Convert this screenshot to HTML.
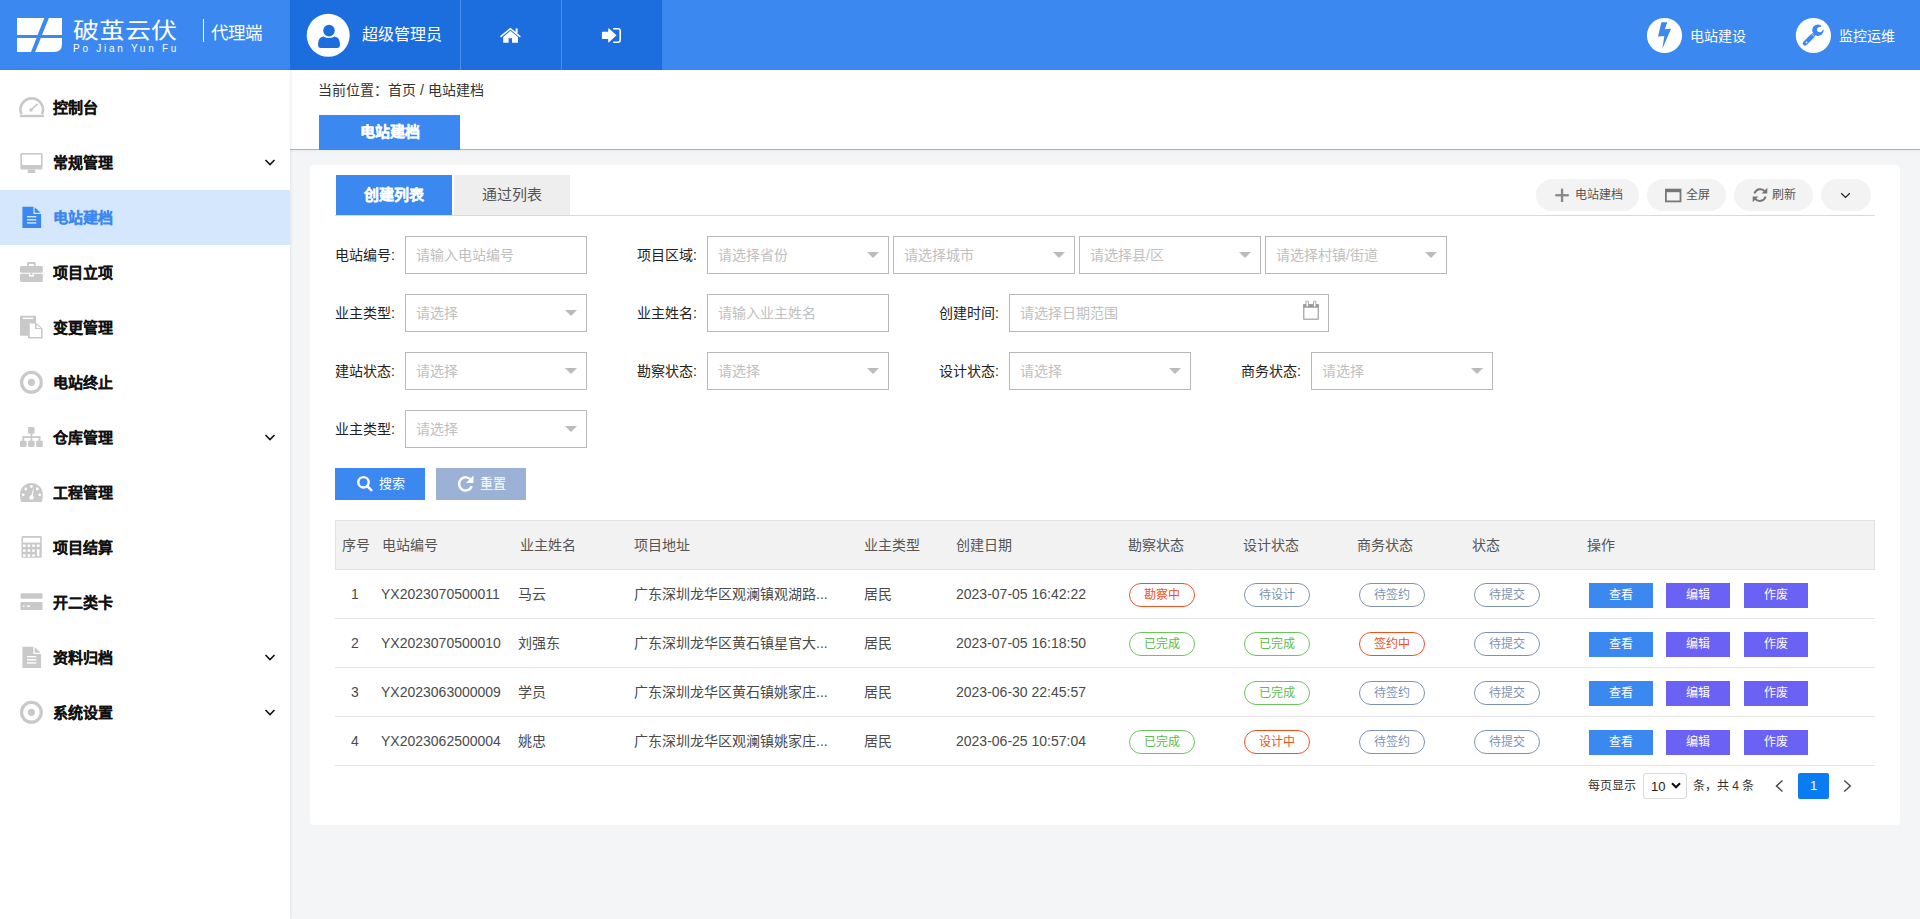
<!DOCTYPE html>
<html lang="zh-CN"><head><meta charset="utf-8">
<style>
*{margin:0;padding:0;box-sizing:border-box}
html,body{width:1920px;height:919px;overflow:hidden;background:#f4f5f7;font-family:"Liberation Sans",sans-serif;color:#333;position:relative}
.abs{position:absolute}
#hdr{position:absolute;left:0;top:0;width:1920px;height:70px;background:#3a88f0;color:#fff}
#hdr .dark{position:absolute;left:290px;top:0;width:372px;height:70px;background:#1c6edf}
#hdr .dv{position:absolute;top:0;width:1px;height:70px;background:#4d8ee6}
#side{position:absolute;left:0;top:70px;width:290px;height:849px;background:#fff;box-shadow:1px 0 3px rgba(0,0,0,0.07);z-index:2}
.mi{position:absolute;left:0;width:290px;height:55px;margin-top:-70px}
.mi .t{position:absolute;left:53px;top:0;line-height:55px;font-size:15px;font-weight:bold;color:#111;-webkit-text-stroke:0.15px #111}
.mi.act{background:#d5e7fd}
.mi.act .t{color:#3a88f0;-webkit-text-stroke:0.15px #3a88f0}
#topw{position:absolute;left:290px;top:70px;width:1630px;height:80px;background:#fff;border-bottom:1px solid #8fb8ee;box-shadow:0 1px 3px rgba(0,0,0,0.06)}
#card{position:absolute;left:310px;top:165px;width:1590px;height:660px;background:#fff;border-radius:4px}
.lbl{position:absolute;font-size:14px;line-height:20px;color:#222}
.inp{position:absolute;height:38px;border:1px solid #b8b8b8;background:#fff}
.inp span{position:absolute;left:10px;top:0;line-height:36px;font-size:14px;color:#c0c0c0;white-space:nowrap}
.inp i{position:absolute;right:9px;top:15px;width:0;height:0;border-left:6px solid transparent;border-right:6px solid transparent;border-top:6px solid #bbb}
.pill{position:absolute;top:179px;height:32px;border-radius:16px;background:#f3f3f3;font-size:13px;color:#555;line-height:31px}
.th{position:absolute;top:520px;line-height:50px;font-size:14px;color:#555}
.td{position:absolute;font-size:14px;color:#4a4a4a;white-space:nowrap}
.tag{position:absolute;width:66px;height:24px;border:1px solid;border-radius:12px;font-size:12px;text-align:center;line-height:22px}
.tg{color:#5dbb4f;border-color:#6cc65c}
.tb{color:#7e93b4;border-color:#7e93b4}
.tr{color:#f0521e;border-color:#f0521e}
.op{position:absolute;width:64px;height:25px;font-size:12px;color:#fff;text-align:center;line-height:25px}
.hl{position:absolute;left:335px;width:1540px;height:1px;background:#e4e4e4}

</style></head><body>
<div id="side">
<div class="mi" style="top:80px"><div class="t">控制台</div></div>
<div class="mi" style="top:135px"><div class="t">常规管理</div></div>
<div class="mi act" style="top:190px"><div class="t">电站建档</div></div>
<div class="mi" style="top:245px"><div class="t">项目立项</div></div>
<div class="mi" style="top:300px"><div class="t">变更管理</div></div>
<div class="mi" style="top:355px"><div class="t">电站终止</div></div>
<div class="mi" style="top:410px"><div class="t">仓库管理</div></div>
<div class="mi" style="top:465px"><div class="t">工程管理</div></div>
<div class="mi" style="top:520px"><div class="t">项目结算</div></div>
<div class="mi" style="top:575px"><div class="t">开二类卡</div></div>
<div class="mi" style="top:630px"><div class="t">资料归档</div></div>
<div class="mi" style="top:685px"><div class="t">系统设置</div></div>

</div>
<svg class="abs" style="left:0;top:0;z-index:3" width="290" height="919" viewBox="0 0 290 919"><path d="M21.5,114.2 A11.2,11.2 0 1 1 41.9,114.2" fill="none" stroke="#c9c9c9" stroke-width="2.6"/>
<rect x="19.8" y="114.8" width="24" height="2.4" fill="#c9c9c9"/>
<line x1="31" y1="109.8" x2="37" y2="104.4" stroke="#c9c9c9" stroke-width="1.6" stroke-linecap="round"/>
<circle cx="31" cy="110" r="1.7" fill="#c9c9c9"/>
<rect x="20.3" y="153" width="22.3" height="16.6" rx="1.6" fill="#c9c9c9"/>
<rect x="22" y="154.6" width="19" height="10.4" fill="#fff"/>
<path d="M28,169.5 L35,169.5 L35.4,173 L27.6,173 Z" fill="#c9c9c9"/>
<path d="M22.4,206.7 L33.4,206.7 L33.4,213.89999999999998 L41.1,213.89999999999998 L41.1,228.0 L22.4,228.0 Z" fill="#3a88f0"/>
<path d="M34.7,207.29999999999998 L40.6,212.7 L34.7,212.7 Z" fill="#3a88f0"/>
<rect x="27" y="216.0" width="9.3" height="1.4" fill="#d5e7fd"/>
<rect x="27" y="219.1" width="9.3" height="1.4" fill="#d5e7fd"/>
<rect x="27" y="222.2" width="9.3" height="1.4" fill="#d5e7fd"/>
<path d="M27.2,267 L27.2,263.2 Q27.2,262 28.4,262 L34.4,262 Q35.6,262 35.6,263.2 L35.6,267 L33.8,267 L33.8,264 L29,264 L29,267 Z" fill="#c9c9c9"/>
<rect x="20" y="266" width="22.8" height="6.8" rx="1.4" fill="#c9c9c9"/>
<rect x="20" y="273.8" width="22.8" height="8.2" rx="1.2" fill="#c9c9c9"/>
<rect x="29" y="273" width="4.8" height="3.6" fill="#fff"/><rect x="30.3" y="273" width="2.2" height="2.2" fill="#c9c9c9"/>
<rect x="20" y="315.8" width="16" height="20" rx="0.8" fill="#c9c9c9"/>
<rect x="22.8" y="317.6" width="10.3" height="1.4" fill="#fff"/>
<path d="M28,322 L35.5,322 L42.6,328.8 L42.6,338.6 L28,338.6 Z" fill="#c9c9c9"/>
<path d="M29.8,323.6 L35,323.6 L35,329 L41,329 L41,337 L29.8,337 Z" fill="#fff"/>
<path d="M36.6,324.5 L40.2,328 L36.6,328 Z" fill="#fff"/>
<circle cx="31.4" cy="382.3" r="9.9" fill="none" stroke="#c9c9c9" stroke-width="3.2"/>
<circle cx="31.4" cy="382.3" r="3.6" fill="#c9c9c9"/>
<rect x="28.1" y="427" width="6.5" height="6.8" rx="0.8" fill="#c9c9c9"/>
<rect x="30.5" y="433.5" width="1.8" height="7.5" fill="#c9c9c9"/>
<rect x="22.4" y="436.2" width="18" height="1.8" fill="#c9c9c9"/>
<rect x="22.4" y="436.2" width="1.8" height="5" fill="#c9c9c9"/>
<rect x="38.6" y="436.2" width="1.8" height="5" fill="#c9c9c9"/>
<rect x="20" y="440.8" width="6.6" height="6.1" rx="0.8" fill="#c9c9c9"/>
<rect x="28.1" y="440.8" width="6.5" height="6.1" rx="0.8" fill="#c9c9c9"/>
<rect x="36.2" y="440.8" width="6.6" height="6.1" rx="0.8" fill="#c9c9c9"/>
<path d="M21.2,501.9 Q20,499 20,494.4 A11.4,11.4 0 0 1 42.8,494.4 Q42.8,499 41.6,501.9 Z" fill="#c9c9c9"/>
<circle cx="31.4" cy="486.5" r="1.4" fill="#fff"/>
<circle cx="25.7" cy="489" r="1.4" fill="#fff"/>
<circle cx="37.2" cy="489" r="1.4" fill="#fff"/>
<circle cx="23.2" cy="494.8" r="1.4" fill="#fff"/>
<circle cx="39.7" cy="494.8" r="1.4" fill="#fff"/>
<circle cx="31.5" cy="497.5" r="2.2" fill="#fff"/>
<path d="M30.8,497 L33.2,489.3 L33.9,489.5 L32.3,497.3 Z" fill="#fff"/>
<rect x="21.5" y="536" width="20.2" height="21.8" rx="1.4" fill="#c9c9c9"/>
<rect x="23" y="537.8" width="17.2" height="4.8" fill="#fff"/>
<rect x="23.0" y="544.5" width="2.6" height="2.4" fill="#fff"/><rect x="27.6" y="544.5" width="2.6" height="2.4" fill="#fff"/><rect x="32.2" y="544.5" width="2.6" height="2.4" fill="#fff"/><rect x="23.0" y="549.4" width="2.6" height="2.4" fill="#fff"/><rect x="27.6" y="549.4" width="2.6" height="2.4" fill="#fff"/><rect x="32.2" y="549.4" width="2.6" height="2.4" fill="#fff"/><rect x="23.0" y="554.3" width="2.6" height="2.4" fill="#fff"/><rect x="27.6" y="554.3" width="2.6" height="2.4" fill="#fff"/><rect x="32.2" y="554.3" width="2.6" height="2.4" fill="#fff"/><rect x="36.8" y="544.5" width="2.8" height="2.4" fill="#fff"/><rect x="37" y="549.2" width="2.4" height="7" fill="#fff"/>
<rect x="20.5" y="593.2" width="22" height="5.6" rx="0.8" fill="#c9c9c9"/>
<rect x="20.5" y="602" width="22" height="8" rx="0.8" fill="#c9c9c9"/>
<rect x="23" y="605.5" width="1.5" height="1.4" fill="#fff"/><rect x="27" y="605.5" width="3" height="1.4" fill="#fff"/>
<path d="M22.4,646.7 L33.4,646.7 L33.4,653.9000000000001 L41.1,653.9000000000001 L41.1,668.0 L22.4,668.0 Z" fill="#c9c9c9"/>
<path d="M34.7,647.3000000000001 L40.6,652.7 L34.7,652.7 Z" fill="#c9c9c9"/>
<rect x="27" y="656.0" width="9.3" height="1.4" fill="#fff"/>
<rect x="27" y="659.1" width="9.3" height="1.4" fill="#fff"/>
<rect x="27" y="662.2" width="9.3" height="1.4" fill="#fff"/>
<circle cx="31.4" cy="712.3" r="9.9" fill="none" stroke="#c9c9c9" stroke-width="3.2"/>
<circle cx="31.4" cy="712.3" r="3.6" fill="#c9c9c9"/><polyline points="265.5,160.0 270,164.5 274.5,160.0" fill="none" stroke="#111" stroke-width="1.6"/><polyline points="265.5,655.0 270,659.5 274.5,655.0" fill="none" stroke="#111" stroke-width="1.6"/><polyline points="265.5,710.0 270,714.5 274.5,710.0" fill="none" stroke="#111" stroke-width="1.6"/><polyline points="265.5,435.0 270,439.5 274.5,435.0" fill="none" stroke="#111" stroke-width="1.6"/></svg>
<div id="hdr">
  <svg class="abs" style="left:0;top:0" width="70" height="70" viewBox="0 0 70 70">
    <polygon fill="#fff" points="17,18 44.3,18 37.6,35 17,35"/>
    <polygon fill="#fff" points="48.9,18 62,18 62,35 42,35"/>
    <polygon fill="#fff" points="17,38 36.5,38 31,52 17,52"/>
    <path fill="#fff" d="M40.8,38 L62,38 L62,44 Q62,52 54,52 L35.1,52 Z"/>
  </svg>
  <div class="abs" style="left:73px;top:13px;font-size:26px;line-height:30px;transform:scaleY(0.84);transform-origin:0 100%;font-weight:500">破茧云伏</div>
  <div class="abs" style="left:73px;top:42px;font-size:10px;line-height:14px;letter-spacing:2.75px">Po Jian Yun Fu</div>
  <div class="abs" style="left:203px;top:19px;width:1px;height:23px;background:#fff"></div>
  <div class="abs" style="left:211px;top:21px;font-size:17.5px;line-height:24px">代理端</div>
  <div class="dark"></div>
  <div class="dv" style="left:460px"></div><div class="dv" style="left:561px"></div>
  <svg class="abs" style="left:290px;top:0" width="380" height="70" viewBox="290 0 380 70">
    <circle cx="328.2" cy="35.3" r="21.5" fill="#fff"/>
    <circle cx="329" cy="30.6" r="5.8" fill="#1c6edf"/>
    <path d="M318,44.5 Q318,37 323.6,36.4 Q329,39.6 334.4,36.4 Q340,37 340,44.5 Q340,48.1 337,48.1 L321,48.1 Q318,48.1 318,44.5 Z" fill="#1c6edf"/>
    <path d="M501,36.4 L510.4,28.6 L519.8,36.4" fill="none" stroke="#fff" stroke-width="1.5" stroke-linecap="round" stroke-linejoin="miter"/>
    <rect x="515.6" y="28.4" width="2" height="4.6" fill="#fff"/>
    <path d="M510.4,30.8 L518,37 L518,42.3 Q518,42.8 517.5,42.8 L512,42.8 L512,38.3 L508.6,38.3 L508.6,42.8 L503.7,42.8 Q503.2,42.8 503.2,42.3 L503.2,37 Z" fill="#fff"/>
    <path d="M602.5,31.8 L608.2,31.8 L608.2,28.6 Q608.6,28.2 609,28.6 L616.5,35.3 L609,42.2 Q608.6,42.6 608.2,42.2 L608.2,38.9 L602.5,38.9 Q601.9,38.9 601.9,38.3 L601.9,32.4 Q601.9,31.8 602.5,31.8 Z" fill="#fff"/>
    <path d="M613.2,28.8 L618,28.8 Q620.2,28.8 620.2,31 L620.2,40 Q620.2,42.2 618,42.2 L613.2,42.2" fill="none" stroke="#fff" stroke-width="1.6"/>
  </svg>
  <div class="abs" style="left:362px;top:24px;font-size:16px;line-height:22px">超级管理员</div>
  <svg class="abs" style="left:1640px;top:0" width="200" height="70" viewBox="1640 0 200 70">
    <circle cx="1664.5" cy="35.5" r="17.6" fill="#fff"/>
    <path d="M1661.4,22.3 L1667.3,22.3 L1664.8,29.2 L1671,28.7 L1662.4,48.8 L1664.3,36.1 L1658,36.6 Z" fill="#3a88f0"/>
    <circle cx="1813.4" cy="35.5" r="17.6" fill="#fff"/>
    <path d="M1805,43.4 L1812.8,35.6" stroke="#3a88f0" stroke-width="4.6" stroke-linecap="round"/>
    <circle cx="1817.9" cy="30.2" r="5.7" fill="#3a88f0"/>
    <line x1="1811.3" y1="33.6" x2="1814.6" y2="36.9" stroke="#fff" stroke-width="0.7"/>
    <circle cx="1819.7" cy="29.6" r="2.7" fill="#fff"/>
    <g transform="rotate(-28 1819.7 29.6)"><rect x="1819.7" y="27.6" width="7" height="4" fill="#fff"/></g>
    <circle cx="1806.5" cy="42.3" r="0.85" fill="#fff"/>
  </svg>
  <div class="abs" style="left:1690px;top:26px;font-size:14px;line-height:20px">电站建设</div>
  <div class="abs" style="left:1839px;top:26px;font-size:14px;line-height:20px">监控运维</div>
</div>

<div id="topw"></div>
<div class="abs" style="left:318px;top:80px;font-size:14px;line-height:20px;color:#333">当前位置：首页 / 电站建档</div>
<div class="abs" style="left:319px;top:115px;width:141px;height:35px;background:#3a88f0;color:#fff;font-weight:bold;font-size:15px;line-height:34px;text-align:center;-webkit-text-stroke:0.2px #fff">电站建档</div>

<div id="card"></div>
<div class="abs" style="left:336px;top:175px;width:116px;height:41px;background:#3a88f0;color:#fff;font-weight:bold;font-size:15px;line-height:40px;text-align:center;-webkit-text-stroke:0.2px #fff">创建列表</div>
<div class="abs" style="left:454px;top:175px;width:116px;height:40px;background:#eeeeee;color:#555;font-size:15px;line-height:40px;text-align:center">通过列表</div>
<div class="abs" style="left:335px;top:215px;width:1540px;height:1px;background:#d9d9d9"></div>
<!-- toolbar pills -->
<div class="pill" style="left:1536px;width:103px"></div>
<div class="pill" style="left:1647px;width:79px"></div>
<div class="pill" style="left:1734px;width:79px"></div>
<div class="pill" style="left:1821px;width:50px"></div>
<svg class="abs" style="left:1500px;top:170px" width="400" height="50" viewBox="1500 170 400 50">
  <rect x="1560.9" y="188.6" width="2.3" height="13.4" fill="#888"/><rect x="1555.3" y="194.1" width="13.5" height="2.3" fill="#888"/>
  <rect x="1665.9" y="189.6" width="14.6" height="11.8" fill="none" stroke="#777" stroke-width="1.8"/><rect x="1665.9" y="189.6" width="14.6" height="2.6" fill="#777"/>
  <path d="M1754.5,193.5 A6,6 0 0 1 1765,191.5" fill="none" stroke="#777" stroke-width="2"/>
  <path d="M1767.3,187.8 L1767.3,193.6 L1761.6,193.6 Z" fill="#777"/>
  <path d="M1765.6,196.5 A6,6 0 0 1 1755,198.5" fill="none" stroke="#777" stroke-width="2"/>
  <path d="M1752.7,202.2 L1752.7,196.4 L1758.4,196.4 Z" fill="#777"/>
  <polyline points="1841.2,193.2 1845.5,197.4 1849.8,193.2" fill="none" stroke="#222" stroke-width="1.25"/>
</svg>
<div class="abs" style="left:1575px;top:187px;font-size:12px;line-height:17px;color:#555">电站建档</div>
<div class="abs" style="left:1686px;top:187px;font-size:12px;line-height:17px;color:#555">全屏</div>
<div class="abs" style="left:1772px;top:187px;font-size:12px;line-height:17px;color:#555">刷新</div>

<!-- form -->
<div class="lbl" style="left:335px;top:245px">电站编号:</div>
<div class="inp" style="left:405px;top:236px;width:182px"><span>请输入电站编号</span></div>
<div class="lbl" style="left:637px;top:245px">项目区域:</div>
<div class="inp" style="left:707px;top:236px;width:182px"><span>请选择省份</span><i></i></div>
<div class="inp" style="left:893px;top:236px;width:182px"><span>请选择城市</span><i></i></div>
<div class="inp" style="left:1079px;top:236px;width:182px"><span>请选择县/区</span><i></i></div>
<div class="inp" style="left:1265px;top:236px;width:182px"><span>请选择村镇/街道</span><i></i></div>

<div class="lbl" style="left:335px;top:303px">业主类型:</div>
<div class="inp" style="left:405px;top:294px;width:182px"><span>请选择</span><i></i></div>
<div class="lbl" style="left:637px;top:303px">业主姓名:</div>
<div class="inp" style="left:707px;top:294px;width:182px"><span>请输入业主姓名</span></div>
<div class="lbl" style="left:939px;top:303px">创建时间:</div>
<div class="inp" style="left:1009px;top:294px;width:320px"><span>请选择日期范围</span></div>
<svg class="abs" style="left:1300px;top:298px" width="24" height="26" viewBox="1300 298 24 26">
  <rect x="1303.8" y="304.8" width="14.4" height="14.4" fill="none" stroke="#999" stroke-width="1.1"/>
  <rect x="1303.3" y="304.3" width="15.4" height="3.4" fill="#999"/>
  <rect x="1305.5" y="300.4" width="3.4" height="6" rx="1.7" fill="#aaa"/><rect x="1306.5" y="301.6" width="1.4" height="4.8" fill="#fff"/>
  <rect x="1313" y="300.4" width="3.4" height="6" rx="1.7" fill="#aaa"/><rect x="1314" y="301.6" width="1.4" height="4.8" fill="#fff"/>
</svg>

<div class="lbl" style="left:335px;top:361px">建站状态:</div>
<div class="inp" style="left:405px;top:352px;width:182px"><span>请选择</span><i></i></div>
<div class="lbl" style="left:637px;top:361px">勘察状态:</div>
<div class="inp" style="left:707px;top:352px;width:182px"><span>请选择</span><i></i></div>
<div class="lbl" style="left:939px;top:361px">设计状态:</div>
<div class="inp" style="left:1009px;top:352px;width:182px"><span>请选择</span><i></i></div>
<div class="lbl" style="left:1241px;top:361px">商务状态:</div>
<div class="inp" style="left:1311px;top:352px;width:182px"><span>请选择</span><i></i></div>

<div class="lbl" style="left:335px;top:419px">业主类型:</div>
<div class="inp" style="left:405px;top:410px;width:182px"><span>请选择</span><i></i></div>

<!-- buttons -->
<div class="abs" style="left:335px;top:468px;width:90px;height:32px;background:#3a88f0"></div>
<div class="abs" style="left:436px;top:468px;width:90px;height:32px;background:#9bb2d6"></div>
<svg class="abs" style="left:340px;top:468px" width="200" height="31" viewBox="340 468 200 31">
  <circle cx="363.5" cy="482.3" r="5.2" fill="none" stroke="#fff" stroke-width="2.4"/>
  <line x1="367.2" y1="486" x2="371.3" y2="490.1" stroke="#fff" stroke-width="2.6" stroke-linecap="round"/>
  <path d="M471.3,480.5 A6.6,6.6 0 1 0 471.8,486.3" fill="none" stroke="#fff" stroke-width="2.4"/>
  <path d="M473.5,475.5 L473.5,483 L466,483 Z" fill="#fff"/>
</svg>
<div class="abs" style="left:379px;top:475px;font-size:13px;line-height:18px;color:#fff">搜索</div>
<div class="abs" style="left:480px;top:475px;font-size:13px;line-height:18px;color:#fff">重置</div>

<!-- table -->
<div class="abs" style="left:335px;top:520px;width:1540px;height:50px;background:#f2f2f2;border:1px solid #e2e2e2"></div>
<div class="th" style="left:342px">序号</div>
<div class="th" style="left:382px">电站编号</div>
<div class="th" style="left:520px">业主姓名</div>
<div class="th" style="left:634px">项目地址</div>
<div class="th" style="left:864px">业主类型</div>
<div class="th" style="left:956px">创建日期</div>
<div class="th" style="left:1128px">勘察状态</div>
<div class="th" style="left:1243px">设计状态</div>
<div class="th" style="left:1357px">商务状态</div>
<div class="th" style="left:1472px">状态</div>
<div class="th" style="left:1587px">操作</div>
<!-- rows -->
<div class="hl" style="top:618px"></div>
<div class="td" style="left:351px;top:584px;line-height:20px">1</div>
<div class="td" style="left:381px;top:584px;line-height:20px">YX2023070500011</div>
<div class="td" style="left:518px;top:584px;line-height:20px">马云</div>
<div class="td" style="left:634px;top:584px;line-height:20px">广东深圳龙华区观澜镇观湖路...</div>
<div class="td" style="left:864px;top:584px;line-height:20px">居民</div>
<div class="td" style="left:956px;top:584px;line-height:20px">2023-07-05 16:42:22</div>
<div class="tag tr" style="left:1129px;top:583px">勘察中</div>
<div class="tag tb" style="left:1244px;top:583px">待设计</div>
<div class="tag tb" style="left:1359px;top:583px">待签约</div>
<div class="tag tb" style="left:1474px;top:583px">待提交</div>
<div class="op" style="left:1589px;top:583px;background:#3a88f0">查看</div>
<div class="op" style="left:1666px;top:583px;background:#6a62f5">编辑</div>
<div class="op" style="left:1744px;top:583px;background:#6a62f5">作废</div>
<div class="hl" style="top:667px"></div>
<div class="td" style="left:351px;top:633px;line-height:20px">2</div>
<div class="td" style="left:381px;top:633px;line-height:20px">YX2023070500010</div>
<div class="td" style="left:518px;top:633px;line-height:20px">刘强东</div>
<div class="td" style="left:634px;top:633px;line-height:20px">广东深圳龙华区黄石镇星官大...</div>
<div class="td" style="left:864px;top:633px;line-height:20px">居民</div>
<div class="td" style="left:956px;top:633px;line-height:20px">2023-07-05 16:18:50</div>
<div class="tag tg" style="left:1129px;top:632px">已完成</div>
<div class="tag tg" style="left:1244px;top:632px">已完成</div>
<div class="tag tr" style="left:1359px;top:632px">签约中</div>
<div class="tag tb" style="left:1474px;top:632px">待提交</div>
<div class="op" style="left:1589px;top:632px;background:#3a88f0">查看</div>
<div class="op" style="left:1666px;top:632px;background:#6a62f5">编辑</div>
<div class="op" style="left:1744px;top:632px;background:#6a62f5">作废</div>
<div class="hl" style="top:716px"></div>
<div class="td" style="left:351px;top:682px;line-height:20px">3</div>
<div class="td" style="left:381px;top:682px;line-height:20px">YX2023063000009</div>
<div class="td" style="left:518px;top:682px;line-height:20px">学员</div>
<div class="td" style="left:634px;top:682px;line-height:20px">广东深圳龙华区黄石镇姚家庄...</div>
<div class="td" style="left:864px;top:682px;line-height:20px">居民</div>
<div class="td" style="left:956px;top:682px;line-height:20px">2023-06-30 22:45:57</div>
<div class="tag tg" style="left:1244px;top:681px">已完成</div>
<div class="tag tb" style="left:1359px;top:681px">待签约</div>
<div class="tag tb" style="left:1474px;top:681px">待提交</div>
<div class="op" style="left:1589px;top:681px;background:#3a88f0">查看</div>
<div class="op" style="left:1666px;top:681px;background:#6a62f5">编辑</div>
<div class="op" style="left:1744px;top:681px;background:#6a62f5">作废</div>
<div class="hl" style="top:765px"></div>
<div class="td" style="left:351px;top:731px;line-height:20px">4</div>
<div class="td" style="left:381px;top:731px;line-height:20px">YX2023062500004</div>
<div class="td" style="left:518px;top:731px;line-height:20px">姚忠</div>
<div class="td" style="left:634px;top:731px;line-height:20px">广东深圳龙华区观澜镇姚家庄...</div>
<div class="td" style="left:864px;top:731px;line-height:20px">居民</div>
<div class="td" style="left:956px;top:731px;line-height:20px">2023-06-25 10:57:04</div>
<div class="tag tg" style="left:1129px;top:730px">已完成</div>
<div class="tag tr" style="left:1244px;top:730px">设计中</div>
<div class="tag tb" style="left:1359px;top:730px">待签约</div>
<div class="tag tb" style="left:1474px;top:730px">待提交</div>
<div class="op" style="left:1589px;top:730px;background:#3a88f0">查看</div>
<div class="op" style="left:1666px;top:730px;background:#6a62f5">编辑</div>
<div class="op" style="left:1744px;top:730px;background:#6a62f5">作废</div>
<!-- pagination -->
<div class="abs" style="left:1588px;top:778px;font-size:12px;line-height:17px;color:#333">每页显示</div>
<div class="abs" style="left:1643px;top:773px;width:44px;height:26px;border:1px solid #d9d9d9;border-radius:3px;background:#fff"></div>
<div class="abs" style="left:1651px;top:778px;font-size:13px;line-height:17px;color:#222">10</div>
<svg class="abs" style="left:1670px;top:780px" width="12" height="12" viewBox="0 0 12 12"><polyline points="2,3.2 6,7.2 10,3.2" fill="none" stroke="#111" stroke-width="2.1"/></svg>
<div class="abs" style="left:1693px;top:778px;font-size:12px;line-height:17px;color:#333">条，共 4 条</div>
<svg class="abs" style="left:1770px;top:775px" width="90" height="24" viewBox="1770 775 90 24">
  <polyline points="1782.5,780.5 1776.5,786 1782.5,791.5" fill="none" stroke="#444" stroke-width="1.4"/>
  <polyline points="1844.3,780.5 1850.3,786 1844.3,791.5" fill="none" stroke="#444" stroke-width="1.4"/>
</svg>
<div class="abs" style="left:1798px;top:773px;width:31px;height:26px;background:#0a7cf2;border-radius:2px;color:#fff;font-size:13px;line-height:26px;text-align:center">1</div>

</body></html>
